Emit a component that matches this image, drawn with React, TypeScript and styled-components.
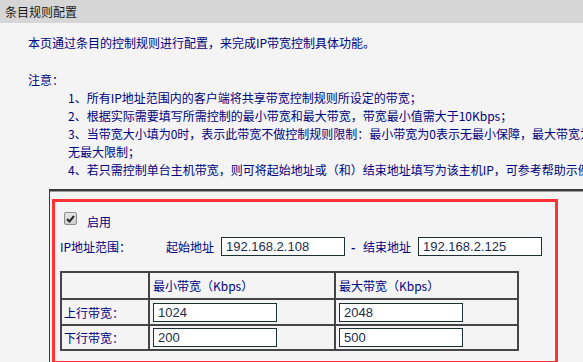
import React from "react";
import styled, { createGlobalStyle } from "styled-components";

const Global = createGlobalStyle`
  html, body { margin: 0; padding: 0; background: #f4f4f4; overflow: hidden; }
  body { font-family: "Noto Sans CJK SC", "Liberation Sans", sans-serif; font-size: 12px; color: #000080; }
`;

const Page = styled.div`
  width: 700px;
`;

const TitleBar = styled.div`
  height: 23px;
  line-height: 23px;
  background: #d6d6d6;
  padding-left: 5px;
  color: #1a1a1a;
  font-size: 12px;
`;

const Content = styled.div`
  padding-left: 28px;
`;

const Line = styled.div<{ $top?: number; $indent?: number }>`
  height: 18px;
  line-height: 18px;
  white-space: nowrap;
  margin-top: ${(p) => p.$top ?? 0}px;
  padding-left: ${(p) => p.$indent ?? 0}px;
`;

const Notes = styled.div`
  margin-top: 0;
`;

const Panel = styled.div`
  margin-top: 10px;
  margin-left: 21px;
  border-top: 2px solid #3a3a3a;
  border-left: 1px solid #3a3a3a;
  box-shadow: inset 0 1px 0 #9a9a9a;
  padding: 8px 0 0 2px;
`;

const RedBox = styled.div`
  width: 500px;
  border: 3px solid #ff3333;
  padding: 10px 0 10px 0;
`;

const EnableRow = styled.label`
  display: flex;
  align-items: center;
  height: 13px;
  margin-left: 9px;
  gap: 10px;
`;

const CheckBox = styled.span`
  width: 11px;
  height: 11px;
  border: 1px solid #8c8c8c;
  border-radius: 2px;
  background: linear-gradient(#e6e6e6, #cfcfcf);
  display: flex;
  align-items: center;
  justify-content: center;
`;

const EnableText = styled.span`
  position: relative;
  top: 3px;
`;

const RangeRow = styled.div`
  display: flex;
  align-items: center;
  height: 20px;
  margin-top: 11px;
  padding-left: 5px;
  white-space: nowrap;
`;

const RangeLabel = styled.span`
  width: 106px;
`;

const Sub = styled.span<{ $gap: number }>`
  margin-right: ${(p) => p.$gap}px;
`;

const Dash = styled.span`
  display: inline-block;
  width: 12px;
  margin-left: 6px;
  font-weight: bold;
`;

const TextInput = styled.input`
  box-sizing: border-box;
  width: 124px;
  height: 19px;
  border: 1px solid #1c3232;
  background: #fff;
  padding: 0 4px;
  margin: 0;
  font-family: "Liberation Sans", Arial, sans-serif;
  font-size: 13px;
  color: #1c2c4c;
  outline: none;
`;

const RateTable = styled.table`
  margin: 15px 0 0 5px;
  border-collapse: separate;
  border-spacing: 2px;
  background: #454545;
  width: 459px;
`;

const Cell = styled.td<{ $w?: number; $h: number }>`
  background: #f4f4f4;
  padding: 0 0 0 3px;
  height: ${(p) => p.$h}px;
  width: ${(p) => (p.$w ? `${p.$w}px` : "auto")};
  vertical-align: middle;
  white-space: nowrap;
  color: #000080;
`;

const LabelCell = styled(Cell)`
  padding-left: 2px;
`;

const Check = () => (
  <svg width="9" height="8" viewBox="0 0 9 8">
    <path d="M1 4 L3.5 6.5 L8 1" fill="none" stroke="#2a2a2a" strokeWidth="2" />
  </svg>
);

export default function App() {
  return (
    <Page>
      <Global />
      <TitleBar>条目规则配置</TitleBar>
      <Content>
        <Line $top={11}>本页通过条目的控制规则进行配置，来完成IP带宽控制具体功能。</Line>
        <Line $top={19}>注意：</Line>
        <Notes>
          <Line $indent={40}>1、所有IP地址范围内的客户端将共享带宽控制规则所设定的带宽；</Line>
          <Line $indent={40}>2、根据实际需要填写所需控制的最小带宽和最大带宽，带宽最小值需大于10Kbps；</Line>
          <Line $indent={40}>3、当带宽大小填为0时，表示此带宽不做控制规则限制：最小带宽为0表示无最小保障，最大带宽为0表示</Line>
          <Line $indent={40}>无最大限制；</Line>
          <Line $indent={40}>4、若只需控制单台主机带宽，则可将起始地址或（和）结束地址填写为该主机IP，可参考帮助示例。</Line>
        </Notes>
        <Panel>
          <RedBox>
            <EnableRow>
              <CheckBox>
                <Check />
              </CheckBox>
              <EnableText>启用</EnableText>
            </EnableRow>
            <RangeRow>
              <RangeLabel>IP地址范围：</RangeLabel>
              <Sub $gap={7}>起始地址</Sub>
              <TextInput defaultValue="192.168.2.108" />
              <Dash>-</Dash>
              <Sub $gap={7}>结束地址</Sub>
              <TextInput defaultValue="192.168.2.125" />
            </RangeRow>
            <RateTable>
              <tbody>
                <tr>
                  <LabelCell $w={84} $h={25}></LabelCell>
                  <Cell $w={181} $h={25}>最小带宽（Kbps）</Cell>
                  <Cell $h={25}>最大带宽（Kbps）</Cell>
                </tr>
                <tr>
                  <LabelCell $h={24}>上行带宽：</LabelCell>
                  <Cell $h={24}>
                    <TextInput defaultValue="1024" />
                  </Cell>
                  <Cell $h={24}>
                    <TextInput defaultValue="2048" />
                  </Cell>
                </tr>
                <tr>
                  <LabelCell $h={23}>下行带宽：</LabelCell>
                  <Cell $h={23}>
                    <TextInput defaultValue="200" />
                  </Cell>
                  <Cell $h={23}>
                    <TextInput defaultValue="500" />
                  </Cell>
                </tr>
              </tbody>
            </RateTable>
          </RedBox>
        </Panel>
      </Content>
    </Page>
  );
}
